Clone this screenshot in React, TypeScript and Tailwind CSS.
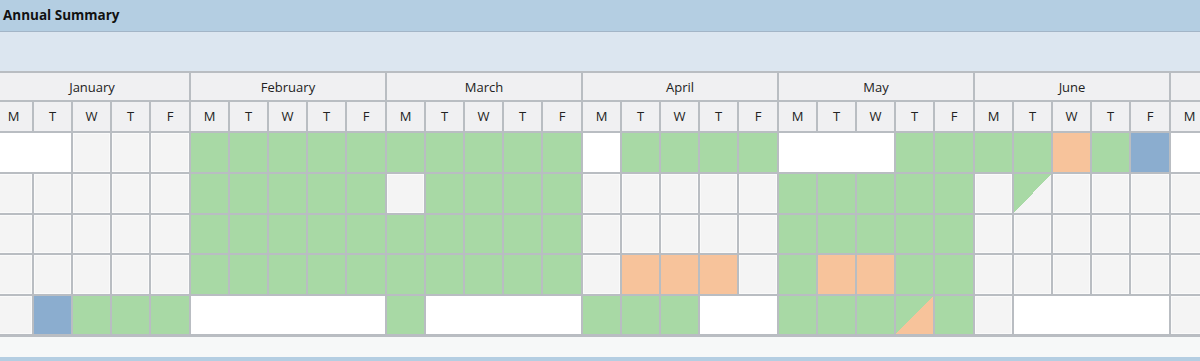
import React from 'react';

type Cell = { k: 'g' | 'G' | 'O' | 'B' | 'W' | 'GX' | 'GO'; span?: number };

const fill: Record<Cell['k'], string> = {
  g: 'bg-[#f4f4f4] shadow-[inset_0_0_0_1px_#fafafa]',
  G: 'bg-[#a8d9a5]',
  O: 'bg-[#f7c39b]',
  B: 'bg-[#8badcf]',
  W: 'bg-white',
  GX: 'bg-[linear-gradient(to_bottom_right,#a8d9a5_50%,#f4f4f4_50%)]',
  GO: 'bg-[linear-gradient(to_bottom_right,#a8d9a5_50%,#f7c39b_50%)]',
};

const spanCls: Record<number, string> = {
  1: '',
  2: 'col-span-2',
  3: 'col-span-3',
  4: 'col-span-4',
  5: 'col-span-5',
};

const c = (k: Cell['k'], span = 1): Cell => ({ k, span });
const all = (k: Cell['k']) => [c(k), c(k), c(k), c(k), c(k)];

const months: { name: string; rows: Cell[][] }[] = [
  {
    name: 'January',
    rows: [
      [c('W', 2), c('g'), c('g'), c('g')],
      all('g'),
      all('g'),
      all('g'),
      [c('g'), c('B'), c('G'), c('G'), c('G')],
    ],
  },
  {
    name: 'February',
    rows: [all('G'), all('G'), all('G'), all('G'), [c('W', 5)]],
  },
  {
    name: 'March',
    rows: [
      all('G'),
      [c('g'), c('G'), c('G'), c('G'), c('G')],
      all('G'),
      all('G'),
      [c('G'), c('W', 4)],
    ],
  },
  {
    name: 'April',
    rows: [
      [c('W'), c('G'), c('G'), c('G'), c('G')],
      all('g'),
      all('g'),
      [c('g'), c('O'), c('O'), c('O'), c('g')],
      [c('G'), c('G'), c('G'), c('W', 2)],
    ],
  },
  {
    name: 'May',
    rows: [
      [c('W', 3), c('G'), c('G')],
      all('G'),
      all('G'),
      [c('G'), c('O'), c('O'), c('G'), c('G')],
      [c('G'), c('G'), c('G'), c('GO'), c('G')],
    ],
  },
  {
    name: 'June',
    rows: [
      [c('G'), c('G'), c('O'), c('G'), c('B')],
      [c('g'), c('GX'), c('g'), c('g'), c('g')],
      all('g'),
      all('g'),
      [c('g'), c('W', 4)],
    ],
  },
  {
    name: 'July',
    rows: [[c('W', 5)], all('g'), all('g'), all('g'), all('g')],
  },
];

const days = ['M', 'T', 'W', 'T', 'F'];

function Month({ name, rows }: { name: string; rows: Cell[][] }) {
  return (
    <div className="shrink-0 grid grid-cols-[37px_37px_37px_37px_38px] grid-rows-[27px_29px_39px_39px_38px_39px_38px] gap-[2px] pl-[2px] pb-[3px] bg-[#b9bdc2]">
      <div className="col-span-5 flex items-center justify-center pt-[3px] bg-[#f0f0f2] text-[13px] text-[#222]">
        {name}
      </div>
      {days.map((d, i) => (
        <div key={i} className="flex items-center justify-center pt-[1px] bg-[#f0f0f2] text-[13px] text-[#222]">
          {d}
        </div>
      ))}
      {rows.map((row, r) =>
        row.map((cell, j) => (
          <div key={`${r}-${j}`} className={`${fill[cell.k]} ${spanCls[cell.span ?? 1]}`} />
        ))
      )}
    </div>
  );
}

export default function App() {
  return (
    <div className="w-[1200px] h-[361px] overflow-hidden bg-[#f0f0f2] font-['Open_Sans','Noto_Sans',sans-serif]">
      <div className="h-[32px] bg-[#b4cee2] border-b border-[#a3b5c7] flex items-center px-[3px]">
        <span className="text-[13.5px] font-bold text-[#111]">Annual Summary</span>
      </div>
      <div className="h-[41px] bg-[#dce6f0] border-b-2 border-[#b9bdc2]" />
      <div className="flex -ml-[7px]">
        {months.map(m => (
          <Month key={m.name} name={m.name} rows={m.rows} />
        ))}
      </div>
      <div className="h-[20px] bg-[#f6f8f8]" />
      <div className="h-[4px] bg-[#b4cee2]" />
    </div>
  );
}
